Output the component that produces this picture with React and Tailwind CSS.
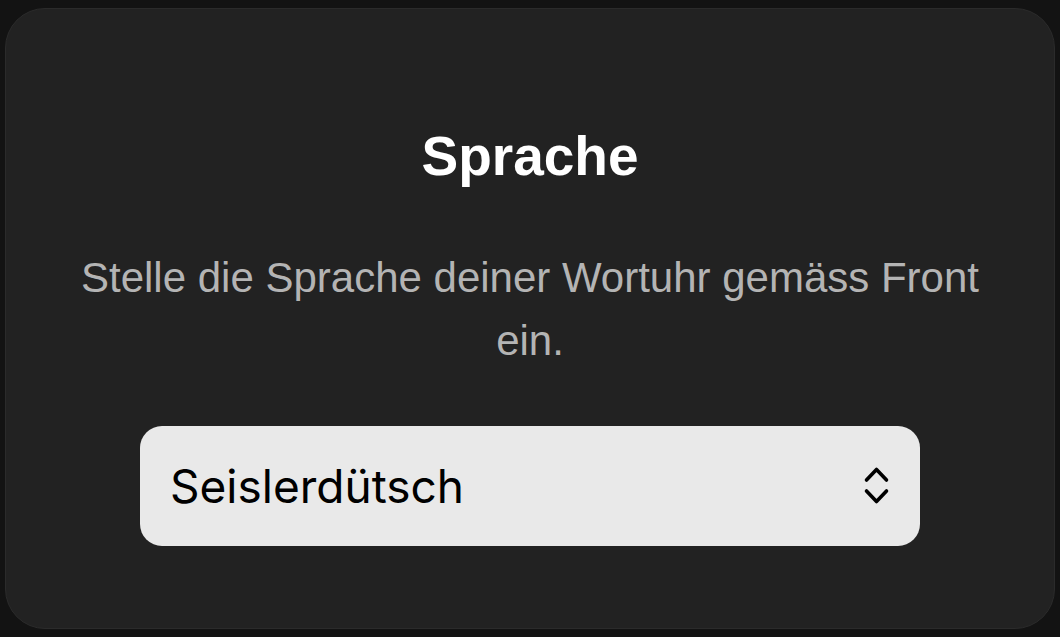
import React from 'react';

const UpDownIcon = () => (
  <svg width="30" height="40" viewBox="0 0 30 40" fill="none" stroke="currentColor" strokeWidth="3.6" strokeLinecap="round" strokeLinejoin="round">
    <path d="M4.5 14 L14.5 3.5 L24.5 14" />
    <path d="M4.5 25 L14.5 35.5 L24.5 25" />
  </svg>
);

const App = () => {
  return (
    <div className="h-[637px] w-full bg-[#131313] px-[5px] pt-[8px] pb-[8px]">
      <div className="h-full rounded-[40px] bg-[#222222] border border-[#2b2b2b] flex flex-col items-center pt-[120px] px-[55px]">
        <h1 className="text-[55px] leading-none font-bold text-white font-['Liberation_Sans',Arial,sans-serif]">
          Sprache
        </h1>
        <p className="mt-[62px] text-[42px] leading-[63px] text-center text-[#b4b4b4] font-['Liberation_Sans',Arial,sans-serif]">
          Stelle die Sprache deiner Wortuhr gemäss Front ein.
        </p>
        <div className="mt-[54px] w-[780px] h-[120px] rounded-[22px] bg-[#e9e9e9] flex items-center justify-between pl-[30px] pr-[28px] text-black">
          <span className="text-[46px] leading-none font-['Inter','Noto_Sans',sans-serif]">Seislerdütsch</span>
          <UpDownIcon />
        </div>
      </div>
    </div>
  );
};

export default App;
